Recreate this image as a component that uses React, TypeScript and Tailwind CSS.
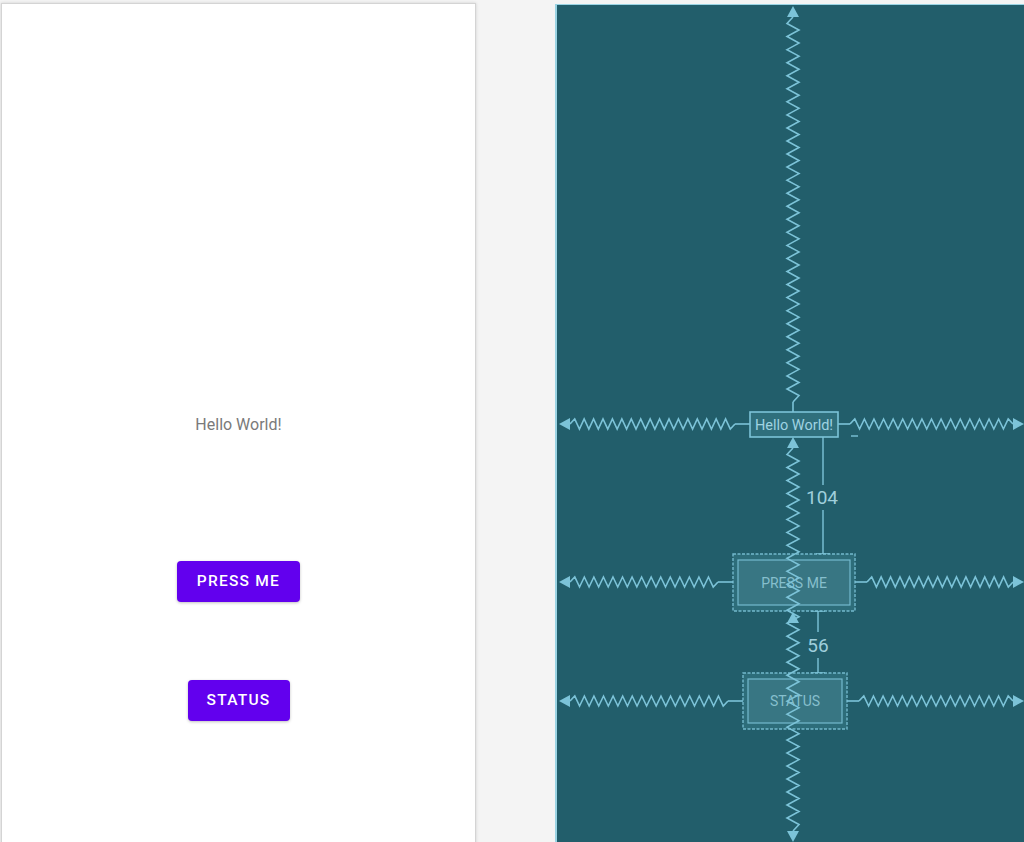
import React from 'react';

const LINE = '#7cc3d8';

// zigzag "spring" between two points along one axis
function zig(x1: number, y1: number, x2: number, y2: number, amp = 5, period = 9.5) {
  const horiz = y1 === y2;
  const len = horiz ? x2 - x1 : y2 - y1;
  const steps = Math.max(2, Math.round(Math.abs(len) / (period / 2)));
  const d = len / steps;
  let p = `M${x1} ${y1}`;
  for (let i = 1; i < steps; i++) {
    const off = i % 2 === 1 ? -amp : amp;
    p += horiz ? ` L${x1 + d * i} ${y1 + off}` : ` L${x1 + off} ${y1 + d * i}`;
  }
  p += ` L${x2} ${y2}`;
  return p;
}

function Arrow({ x, y, dir }: { x: number; y: number; dir: 'l' | 'r' | 'u' | 'd' }) {
  const s = 11;
  const w = 6;
  const pts =
    dir === 'l'
      ? `${x},${y} ${x + s},${y - w} ${x + s},${y + w}`
      : dir === 'r'
      ? `${x},${y} ${x - s},${y - w} ${x - s},${y + w}`
      : dir === 'u'
      ? `${x},${y} ${x - w},${y + s} ${x + w},${y + s}`
      : `${x},${y} ${x - w},${y - s} ${x + w},${y - s}`;
  return <polygon points={pts} fill={LINE} />;
}

function HSprings({ y, left, right }: { y: number; left: number; right: number }) {
  return (
    <g stroke={LINE} strokeWidth={1.6} fill="none">
      <path d={zig(570, y, left - 15, y)} />
      <path d={`M${left - 15} ${y} L${left} ${y}`} />
      <path d={`M${right} ${y} L${right + 12} ${y}`} />
      <path d={zig(right + 12, y, 1013, y)} />
    </g>
  );
}

function WidgetBox({ x, y, w, h, label }: { x: number; y: number; w: number; h: number; label: string }) {
  return (
    <g>
      <rect x={x} y={y} width={w} height={h} fill="#2f6f7c" stroke={LINE} strokeWidth={1.4} strokeDasharray="3 1.5" opacity={0.9} />
      <rect x={x + 5} y={y + 6} width={w - 10} height={h - 12} fill="#3a7784" stroke={LINE} strokeWidth={1.2} opacity={0.9} />
      <text x={x + w / 2} y={y + h / 2 + 5} textAnchor="middle" fontSize={14} fill="#86bfcd" fontFamily="Roboto, sans-serif">
        {label}
      </text>
    </g>
  );
}

function Blueprint() {
  return (
    <svg width={467} height={837} viewBox="557 5 467 837" className="block">
      {/* horizontal constraints */}
      <Arrow x={559} y={424} dir="l" />
      <Arrow x={1024} y={424} dir="r" />
      <HSprings y={424} left={750} right={838} />
      <Arrow x={559} y={582} dir="l" />
      <Arrow x={1024} y={582} dir="r" />
      <HSprings y={582} left={733} right={855} />
      <Arrow x={559} y={701} dir="l" />
      <Arrow x={1024} y={701} dir="r" />
      <HSprings y={701} left={743} right={847} />

      {/* margin markers */}
      <g stroke={LINE} strokeWidth={1.4}>
        <path d="M823 437 L823 485 M823 510 L823 554 M816 554 L830 554" />
        <path d="M818 611 L818 632 M818 658 L818 673 M811 673 L825 673 M811 611 L825 611" />
        <path d="M851 436 L858 436" />
      </g>
      <text x={822} y={504} textAnchor="middle" fontSize={19} fill="#9fcfdc" fontFamily="Roboto, sans-serif">104</text>
      <text x={818} y={652} textAnchor="middle" fontSize={19} fill="#9fcfdc" fontFamily="Roboto, sans-serif">56</text>

      {/* widgets */}
      <rect x={750} y={412} width={88} height={25} fill="#2f6f7c" stroke={LINE} strokeWidth={1.6} />
      <text x={794} y={430} textAnchor="middle" fontSize={14.5} fill="#9fd3e2" fontFamily="Roboto, sans-serif">Hello World!</text>
      <WidgetBox x={733} y={554} w={122} h={57} label="PRESS ME" />
      <WidgetBox x={743} y={673} w={104} h={56} label="STATUS" />

      {/* vertical constraints */}
      <g stroke={LINE} strokeWidth={1.6} fill="none">
        <path d={zig(793, 17, 793, 402, 6, 13)} />
        <path d="M793 402 L793 412" />
        <path d={zig(793, 448, 793, 831, 6, 13)} />
      </g>
      <Arrow x={793} y={6} dir="u" />
      <Arrow x={793} y={437} dir="u" />
      <Arrow x={793} y={612} dir="u" />
      <Arrow x={793} y={842} dir="d" />
    </svg>
  );
}

export default function App() {
  return (
    <div className="flex h-[842px] w-[1024px] overflow-hidden bg-[#f4f4f4]" style={{ fontFamily: 'Roboto, sans-serif' }}>
      {/* design preview */}
      <div className="ml-[1px] mt-[3px] flex h-[850px] w-[475px] flex-col items-center border border-[#d4d4d4] bg-white pt-[411px] shadow-[0_0_3px_rgba(0,0,0,0.15)]">
        <p className="text-[16px] leading-[20px] text-[#7a7a7a]">Hello World!</p>
        <button className="mt-[126px] h-[41px] w-[123px] rounded-[4px] bg-[#6200ee] text-[15.5px] font-medium tracking-[0.08em] text-white shadow-[0_1px_3px_rgba(0,0,0,0.25)]">
          PRESS ME
        </button>
        <button className="mt-[78px] h-[41px] w-[102px] rounded-[4px] bg-[#6200ee] text-[15.5px] font-medium tracking-[0.08em] text-white shadow-[0_1px_3px_rgba(0,0,0,0.25)]">
          STATUS
        </button>
      </div>

      {/* blueprint */}
      <div className="ml-auto mt-[4px] border-l-2 border-t border-[#9ad4e4] bg-[#225e6b]">
        <Blueprint />
      </div>
    </div>
  );
}
